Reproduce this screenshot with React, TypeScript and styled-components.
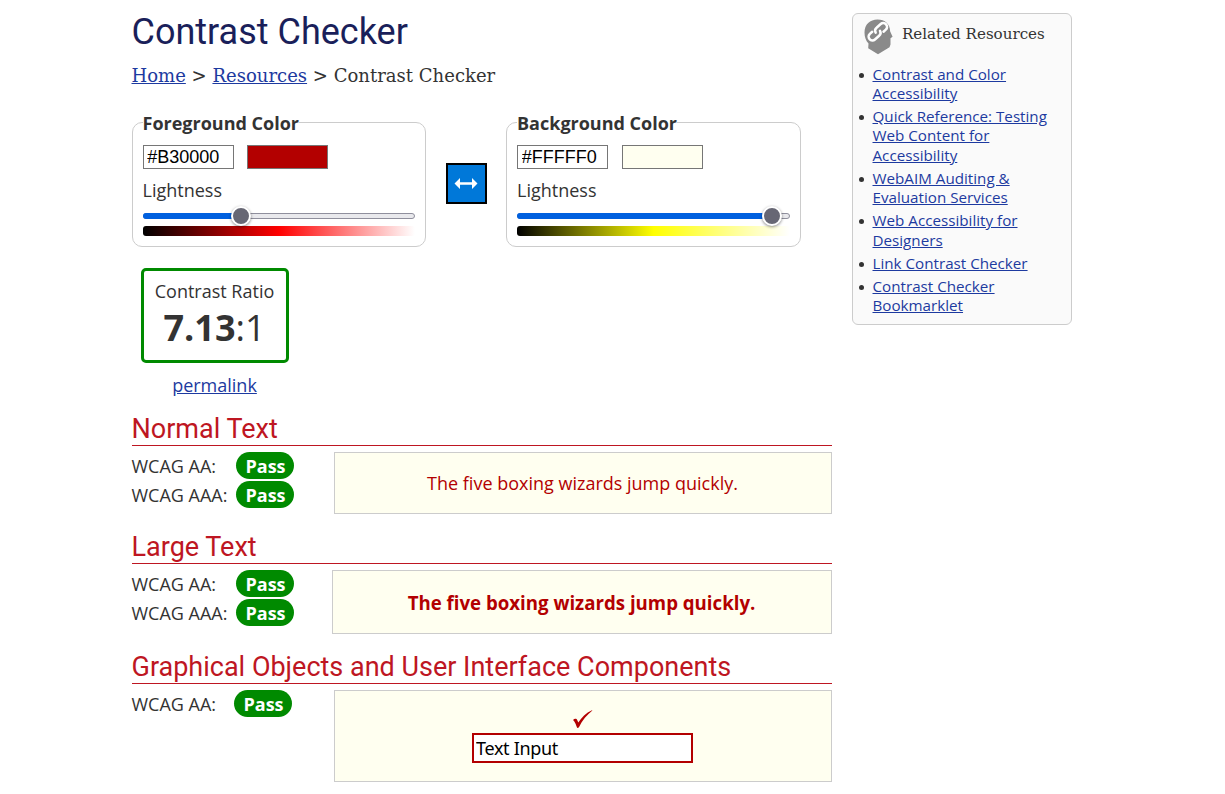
import React from "react";
import styled, { createGlobalStyle } from "styled-components";

const Global = createGlobalStyle`
  * { box-sizing: border-box; }
  body { margin: 0; background: #fff; color: #333; font: 18px/24px "Open Sans", sans-serif; overflow: hidden; }
  a { color: #1d3aa0; text-decoration: underline; }
`;

const Page = styled.div`
  display: grid;
  grid-template-columns: 700px 220px;
  column-gap: 20px;
  width: 940px;
  margin: 0 0 0 131.5px;
  height: 794px;
`;
const Main = styled.main`
  display: flex;
  flex-direction: column;
`;
const Title = styled.h1`
  margin: 10px 0 0;
  font: 400 36px/44px Roboto, sans-serif;
  color: #1a1f5a;
`;
const Crumbs = styled.nav`
  margin-top: 10px;
  font: 18px/24px "DejaVu Serif", serif;
  letter-spacing: 0.02px;
  white-space: nowrap;
`;
const Controls = styled.div`
  display: flex;
  margin-top: 23px;
  height: 136px;
`;
const Panel = styled.fieldset<{ $width: number }>`
  flex: none;
  width: ${(p) => p.$width}px;
  height: 136px;
  margin: 0;
  min-width: 0;
  padding: 11px 10px 0;
  border: 1px solid #ccc;
  border-radius: 10px;
`;
const Legend = styled.legend`
  height: 23px;
  padding: 0;
  font-weight: 700;
`;
const ColorRow = styled.div`
  display: flex;
  gap: 13.9px;
`;
const HexInput = styled.input`
  width: 91px;
  height: 24px;
  padding: 1px 3.7px;
  border: 1px solid #767676;
  border-radius: 0;
  background: #fff;
  color: #000;
  font: 18px "Liberation Sans", sans-serif;
`;
const Swatch = styled.div<{ $color: string }>`
  width: 81px;
  height: 24px;
  border: 1px solid #767676;
  background: ${(p) => p.$color};
`;
const SliderLabel = styled.div`
  margin-top: 9px;
`;
const Track = styled.div`
  display: flex;
  align-items: center;
  height: 6px;
  margin-top: 11px;
  border: 1px solid #8f8f9d;
  border-radius: 3px;
  background: #e9e9ed;
`;
const Filled = styled.div`
  flex: none;
  height: 6px;
  margin-left: -1px;
  border-radius: 3px 0 0 3px;
  background: #0060df;
`;
const Thumb = styled.div`
  flex: none;
  width: 20px;
  height: 20px;
  margin-left: -10px;
  border: 2px solid #fff;
  border-radius: 50%;
  background: #676774;
  box-shadow: 0 1px 3px rgba(0, 0, 0, 0.45);
`;
const Ramp = styled.div<{ $hue: string }>`
  height: 10px;
  margin-top: 7px;
  border-radius: 3px;
  background: linear-gradient(to right, #000, ${(p) => p.$hue}, #fff);
`;
const Swap = styled.button`
  display: flex;
  flex: none;
  align-items: center;
  justify-content: center;
  width: 41px;
  height: 41px;
  margin: 52px 19.5px 0 20px;
  padding: 0;
  border: 2px solid #000;
  background: #0078d9;
`;
const RatioGroup = styled.div`
  width: 148px;
  margin: 21px 0 0 9px;
  text-align: center;
`;
const RatioBox = styled.div`
  height: 95px;
  padding-top: 8px;
  border: 3px solid #008a00;
  border-radius: 5px;
`;
const Ratio = styled.div`
  font-size: 36px;
  line-height: 50px;
`;
const Permalink = styled.div`
  margin-top: 10px;
`;
const Section = styled.section<{ $height: number }>`
  height: ${(p) => p.$height}px;
  padding-top: 17px;
`;
const Heading = styled.h2`
  height: 32px;
  margin: 0;
  border-bottom: 1px solid #be1622;
  font: 400 27px/30px Roboto, sans-serif;
  color: #be1622;
`;
const Results = styled.div`
  display: flex;
  justify-content: space-between;
  margin-top: 6px;
`;
const Levels = styled.div`
  display: flex;
  flex-direction: column;
  gap: 2px;
`;
const Level = styled.div<{ $label?: number }>`
  display: grid;
  grid-template-columns: ${(p) => p.$label ?? 104}px 58px;
  line-height: 29px;
  height: 27px;
  white-space: nowrap;
`;
const Pass = styled.span`
  height: 27px;
  padding-left: 2px;
  border-radius: 14px;
  background: #008a00;
  color: #fff;
  font-weight: 700;
  text-align: center;
`;
const Preview = styled.div<{ $width: number; $height: number; $large?: boolean }>`
  display: flex;
  flex-direction: column;
  align-items: center;
  justify-content: center;
  width: ${(p) => p.$width}px;
  height: ${(p) => p.$height}px;
  padding-top: ${(p) => (p.$large ? 2 : 0)}px;
  border: 1px solid #ccc;
  background: #fffff0;
  color: #b30000;
  font-size: ${(p) => (p.$large ? "18.67px" : "18px")};
  font-weight: ${(p) => (p.$large ? 700 : 400)};
`;
const CheckMark = styled.svg`
  margin-bottom: 4px;
`;
const SampleInput = styled.input`
  width: 221px;
  height: 30px;
  margin-right: 1px;
  padding: 1px 2.5px;
  border: 2px solid #b30000;
  border-radius: 0;
  background: #fff;
  color: #000;
  font: 18px "Noto Sans", sans-serif;
  letter-spacing: -0.32px;
`;
const Aside = styled.aside`
  height: 312px;
  margin-top: 13px;
  border: 1px solid #ccc;
  border-radius: 6px;
  background: #fafafa;
`;
const AsideHead = styled.div`
  display: flex;
  gap: 9.5px;
  padding: 5px 0 0 11px;
  height: 50.5px;
  font: 15.1px/30px "DejaVu Serif", serif;
  white-space: nowrap;
`;
const Links = styled.ul`
  display: flex;
  flex-direction: column;
  gap: 3.45px;
  margin: 0;
  padding: 0 10px 0 6.5px;
  list-style: none;
  font-size: 15.2px;
  line-height: 19.5px;
`;
const LinkItem = styled.li`
  display: flex;
  gap: 8.5px;
  &::before {
    content: "";
    flex: none;
    width: 5px;
    height: 5px;
    margin-top: 8px;
    border-radius: 50%;
    background: #333;
  }
`;

function ColorPanel(props: { name: string; value: string; width: number; level: number; hue: string }) {
  return (
    <Panel $width={props.width}>
      <Legend>{props.name}</Legend>
      <ColorRow>
        <HexInput defaultValue={props.value} />
        <Swatch $color={props.value} />
      </ColorRow>
      <SliderLabel>Lightness</SliderLabel>
      <Track>
        <Filled style={{ width: props.level }} />
        <Thumb />
      </Track>
      <Ramp $hue={props.hue} />
    </Panel>
  );
}

function BothLevels() {
  return (
    <Levels>
      <Level>WCAG AA: <Pass>Pass</Pass></Level>
      <Level>WCAG AAA: <Pass>Pass</Pass></Level>
    </Levels>
  );
}

const resources = [
  ["Contrast and Color", "Accessibility"],
  ["Quick Reference: Testing", "Web Content for", "Accessibility"],
  ["WebAIM Auditing &", "Evaluation Services"],
  ["Web Accessibility for", "Designers"],
  ["Link Contrast Checker"],
  ["Contrast Checker", "Bookmarklet"],
];

export default function App() {
  return (
    <>
      <Global />
      <Page>
        <Main>
          <Title>Contrast Checker</Title>
          <Crumbs>
            <a href="#">Home</a> &gt; <a href="#">Resources</a> &gt; Contrast Checker
          </Crumbs>
          <Controls>
            <ColorPanel name="Foreground Color" value="#B30000" width={294} level={98.5} hue="#f00" />
            <Swap aria-label="Swap colors">
              <svg width="24" height="12" viewBox="0 0 24 12" fill="#fff">
                <path d="M0.5 5.5 6 0V4.2H18V0L23.5 5.5 18 11V6.8H6V11Z" />
              </svg>
            </Swap>
            <ColorPanel name="Background Color" value="#FFFFF0" width={294.5} level={255.3} hue="#ff0" />
          </Controls>
          <RatioGroup>
            <RatioBox>
              <div>Contrast Ratio</div>
              <Ratio>
                <b>7.13</b>:1
              </Ratio>
            </RatioBox>
            <Permalink>
              <a href="#">permalink</a>
            </Permalink>
          </RatioGroup>
          <Section $height={118}>
            <Heading>Normal Text</Heading>
            <Results>
              <BothLevels />
              <Preview $width={498} $height={62}>The five boxing wizards jump quickly.</Preview>
            </Results>
          </Section>
          <Section $height={120}>
            <Heading>Large Text</Heading>
            <Results>
              <BothLevels />
              <Preview $width={500} $height={64} $large>The five boxing wizards jump quickly.</Preview>
            </Results>
          </Section>
          <Section $height={129}>
            <Heading>Graphical Objects and User Interface Components</Heading>
            <Results>
              <Levels>
                <Level $label={102}>WCAG AA: <Pass>Pass</Pass></Level>
              </Levels>
              <Preview $width={498} $height={92}>
                <CheckMark width="20" height="19" viewBox="0 0 20 19" fill="#b30000">
                  <path d="M.1 9.9C1.2 8.6 3.6 8.3 4.3 10.2L5.3 12.6C8.4 7.4 13 2.8 19 .2L19.4 .6C14 4.8 9.4 10.4 5.8 17.4L4.2 18C3.2 15.4 2.2 12 .1 9.9Z" />
                </CheckMark>
                <SampleInput defaultValue="Text Input" />
              </Preview>
            </Results>
          </Section>
        </Main>
        <Aside>
          <AsideHead>
            <svg width="29" height="36" viewBox="0 0 29 36">
              <path fill="#8a8a8a" d="M13.5.5C21 .5 26 5 26.2 12.5L28.6 17.8 26.5 19.3V25.5L25.5 28.2 14 35.3 4.2 29.2 4.5 24.5C1.8 21.5.5 18 .5 13.5.5 5.5 6 .5 13.5.5Z" />
              <g fill="none" stroke="#fff" strokeWidth="2.5" strokeLinecap="round" transform="rotate(-42 13.7 12.6)">
                <path d="M9.5 9H6.4a3.8 3.8 0 0 0 0 7.6H12a3.8 3.8 0 0 0 3.9-3" />
                <path d="M17.9 16.6h3.1a3.8 3.8 0 0 0 0-7.6H15.4a3.8 3.8 0 0 0-3.9 3" />
              </g>
            </svg>
            <span>Related Resources</span>
          </AsideHead>
          <Links>
            {resources.map((lines) => (
              <LinkItem key={lines.join(" ")}>
                <a href="#">
                  {lines.map((line, i) => (
                    <React.Fragment key={line}>
                      {i > 0 && <br />}
                      {line}
                    </React.Fragment>
                  ))}
                </a>
              </LinkItem>
            ))}
          </Links>
        </Aside>
      </Page>
    </>
  );
}
